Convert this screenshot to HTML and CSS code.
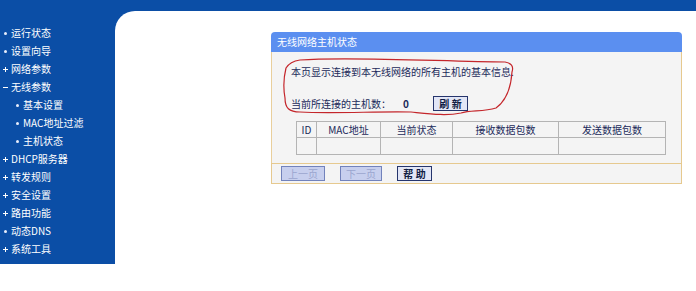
FILE: index.html
```html
<!DOCTYPE html>
<html lang="zh-CN">
  <head>
    <meta charset="UTF-8" />
    <title>无线网络主机状态</title>
    <link rel="stylesheet" href="styles.css">
  </head>
  <body>
    <div class="shell">
      <!-- 左侧菜单 -->
      <ul class="menu">
        <li class="item dot">运行状态</li>
        <li class="item dot">设置向导</li>
        <li class="item plus">网络参数</li>
        <li class="item minus">无线参数</li>
        <li class="item sub dot">基本设置</li>
        <li class="item sub dot">MAC地址过滤</li>
        <li class="item sub dot">主机状态</li>
        <li class="item plus">DHCP服务器</li>
        <li class="item plus">转发规则</li>
        <li class="item plus">安全设置</li>
        <li class="item plus">路由功能</li>
        <li class="item dot">动态DNS</li>
        <li class="item plus">系统工具</li>
      </ul>

      <div class="main">
        <div class="content">
          <div class="panel">
            <div class="panel-title">无线网络主机状态</div>
            <div class="panel-body">
              <p class="desc">本页显示连接到本无线网络的所有主机的基本信息.</p>
              <div class="count-row">
                <span>当前所连接的主机数：</span>
                <span class="count">0</span>
                <button class="btn btn-main">刷&nbsp;新</button>
              </div>
              <table class="hosts">
                <thead>
                  <tr>
                    <th class="c-id">ID</th>
                    <th class="c-mac">MAC地址</th>
                    <th class="c-state">当前状态</th>
                    <th class="c-rx">接收数据包数</th>
                    <th class="c-tx">发送数据包数</th>
                  </tr>
                </thead>
                <tbody>
                  <tr><td></td><td></td><td></td><td></td><td></td></tr>
                </tbody>
              </table>
            </div>
            <div class="panel-foot">
              <button class="btn btn-off w-prev">上一页</button>
              <button class="btn btn-off w-next">下一页</button>
              <button class="btn btn-main w-help">帮&nbsp;助</button>
            </div>

            <!-- 手画的红圈 -->
            <svg class="scribble" width="260" height="100" viewBox="0 0 260 100">
              <path d="M29 28 C80 24 180 30 234 30 C240 31 243 34 241 40 C240 55 236 68 225 76 C212 80 200 78 190 81 C175 84 160 82 140 80 C110 79 60 82 29 80 C18 80 14 76 14 66 C12 55 13 44 15 36 C18 31 22 29 29 28 Z" fill="none" stroke="#c4262b" stroke-width="1.2"/>
            </svg>
          </div>
        </div>
      </div>
    </div>
  </body>
</html>
```

FILE: styles.css
```css
body {
  margin: 0;
  background: #fff;
  font-family: "Noto Sans CJK SC", "DejaVu Sans", sans-serif;
  font-size: 10px;
}
.shell {
  display: flex;
  align-items: flex-start;
}
.menu {
  width: 115px;
  height: 264px;
  box-sizing: border-box;
  margin: 0;
  padding: 24px 0 0 0;
  list-style: none;
  background-color: #0b4ea6;
  color: #fff;
}
.item {
  display: flex;
  align-items: center;
  height: 18px;
  padding-left: 3px;
  line-height: 18px;
  white-space: nowrap;
}
.item::before {
  content: "";
  width: 5px;
  height: 5px;
  margin-right: 3px;
  flex-shrink: 0;
}
.item.sub {
  padding-left: 15px;
}
.dot::before {
  width: 3px;
  height: 3px;
  margin: 0 4px 0 1px;
  border-radius: 50%;
  background: #e8eefc;
}
.plus::before {
  background:
    linear-gradient(#fff, #fff) center / 5px 1px no-repeat,
    linear-gradient(#fff, #fff) center / 1px 5px no-repeat;
}
.minus::before {
  background: linear-gradient(#fff, #fff) center / 5px 1px no-repeat;
}
.main {
  flex: 1;
  padding-top: 11px;
  background-color: #0b4ea6;
}
.content {
  height: 280px;
  box-sizing: border-box;
  padding: 21px 0 0 156px;
  background: #fff;
  border-top-left-radius: 20px;
}
.panel {
  position: relative;
  width: 411px;
  color: #1b2a5a;
}
.panel-title {
  height: 20px;
  padding-left: 6px;
  line-height: 20px;
  color: #fff;
  background-color: #5b8ff0;
  border-radius: 4px 4px 0 0;
}
.panel-body {
  padding: 13px 0 8px 19px;
  background: #f4f4f4;
  border-left: 1px solid #e9cf9c;
  border-right: 1px solid #e6c98f;
}
.desc {
  margin: 0;
  line-height: 14px;
}
.count-row {
  display: flex;
  align-items: center;
  height: 15px;
  margin-top: 17px;
}
.count {
  margin-left: 12px;
  width: 30px;
  font-weight: bold;
}
.hosts {
  width: 364px;
  margin: 10px 0 0 5px;
  border-collapse: collapse;
  table-layout: fixed;
}
.hosts th,
.hosts td {
  border: 1px solid #b4b4b4;
  padding: 0;
  text-align: center;
  font-weight: normal;
}
.hosts th {
  height: 15px;
  line-height: 15px;
}
.hosts td {
  height: 16px;
}
.c-id { width: 19px; }
.c-mac { width: 63px; }
.c-state { width: 71px; }
.c-rx { width: 105px; }
.c-tx { width: 106px; }
.panel-foot {
  display: flex;
  gap: 15px;
  padding: 2px 0 2px 9px;
  background: #f4f4f4;
  border: 1px solid #e6c98f;
}
.btn {
  height: 15px;
  padding: 0;
  font-family: inherit;
  font-size: 10px;
  line-height: 13px;
  cursor: pointer;
}
.btn-main {
  width: 35px;
  color: #101c44;
  font-weight: bold;
  background: #e2e6f6;
  border: 1px solid #26356c;
}
.btn-off {
  color: #9aa5cf;
  background: #c7cfee;
  border: 1px solid #7282bb;
}
.w-prev { width: 44px; }
.w-next { width: 42px; }
.w-help { width: 35px; }
.scribble {
  position: absolute;
  left: 0;
  top: 0;
  pointer-events: none;
}
```
